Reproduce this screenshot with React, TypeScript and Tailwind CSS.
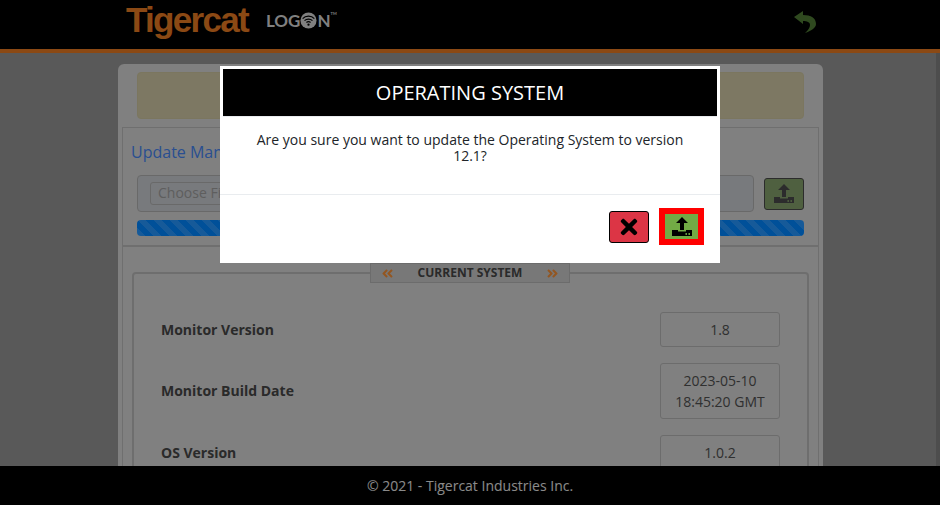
import { FaTimes, FaAngleDoubleLeft, FaAngleDoubleRight } from "react-icons/fa";

function UploadIcon({ className, dots }: { className?: string; dots: string }) {
  return (
    <svg viewBox="0 0 20 20" className={className} fill="currentColor">
      <path d="M10 0 L16 6 L12 6 L12 13 L8 13 L8 6 L4 6 Z" />
      <path d="M0 13 L6 13 L6 14.5 L14 14.5 L14 13 L20 13 L20 19 L0 19 Z" />
      <rect x="13.5" y="16" width="1.4" height="2" fill={dots} />
      <rect x="16.5" y="16" width="1.4" height="2" fill={dots} />
    </svg>
  );
}

function BackArrow() {
  return (
    <svg viewBox="0 0 22 22" className="w-[22px] h-[22px] text-[#4f7b34]" fill="currentColor">
      <path d="M0 6 L9 0 L9 4 C17 4 22 7 22 13 C22 17 17 20 11 22 C14 19 16 17 16 14 C16 11 13 10 9 10 L9 13 Z" />
    </svg>
  );
}

function WifiO() {
  return (
    <svg viewBox="0 0 18 18" className="w-[17px] h-[17px]">
      <circle cx="9" cy="9" r="8.5" fill="#d5d5d5" />
      <path d="M2.8 7 C6 3.6 12 3.6 15.2 7 M4.8 9.2 C7 7 11 7 13.2 9.2 M6.8 11.2 C8 10.2 10 10.2 11.2 11.2" fill="none" stroke="#000" strokeWidth="1.3" />
      <circle cx="9" cy="13.4" r="1.2" fill="#000" />
    </svg>
  );
}

function InfoRow({ label, lines }: { label: string; lines: string[] }) {
  return (
    <div className="flex items-center justify-between">
      <div className="font-bold text-[14px] text-[#464646] -mt-[1px]">{label}</div>
      <div className="w-[120px] shrink-0 border border-[#b4b4b4] rounded-[3px] py-[6px] text-center text-[14px] leading-[21px] text-[#505050]">
        {lines.map((l) => (
          <div key={l}>{l}</div>
        ))}
      </div>
    </div>
  );
}

export default function App() {
  return (
    <div className="relative h-screen flex flex-col overflow-hidden font-['Open_Sans',sans-serif] bg-[#949494]">
      <header className="h-[53px] shrink-0 bg-black border-b-[4px] border-[#e87b22] flex items-center pl-[126px] pr-[124px]">
        <div className="font-['Liberation_Sans',sans-serif] font-bold text-[35px] leading-none tracking-[-1.7px] text-[#e87b22] -mt-[10px]">
          Tigercat
        </div>
        <div className="ml-[18px] -mt-[8px] flex items-center font-['Lato',sans-serif] font-bold text-[17px] leading-none text-[#d5d5d5]">
          <span>LOG</span>
          <WifiO />
          <span>N</span>
          <span className="text-[4px] self-start">TM</span>
        </div>
        <div className="ml-auto -mt-[6px]">
          <BackArrow />
        </div>
      </header>

      <main className="relative flex-1 min-h-0 overflow-hidden flex items-start">
        <div className="ml-[118px] w-[705px] mt-[11px] bg-[#d5d5d5] rounded-md px-[4px] pt-[8px]">
          <div className="mx-[15px] h-[47px] bg-[#d0c8a5] border border-[#cdc59f] rounded" />
          <div className="mt-[8px] border border-[#b9b9b9] pt-[13px] pb-[9px] px-[8px]">
            <h2 className="text-[16px] leading-[22px] text-[#4684f0]">Update Manager</h2>
            <div className="mx-[6px] mt-[12px] flex items-center gap-[10px]">
              <div className="flex-1 h-[37px] border border-[#b0b0b0] rounded bg-[#c8cbd0] flex items-center px-[12px]">
                <div className="h-[23px] px-[7px] border border-[#b0b0b0] rounded-[3px] text-[14px] leading-[19px] text-[#9d9d9d]">
                  Choose File
                </div>
              </div>
              <button className="w-[40px] h-[32px] bg-[#84a06b] border border-[#4a4a4a] rounded-[3px] flex items-center justify-center text-[#4a4a4a]">
                <UploadIcon className="w-[20px] h-[20px]" dots="#84a06b" />
              </button>
            </div>
            <div className="mx-[6px] mt-[8px] h-[16px] rounded bg-[#0085ff] bg-[linear-gradient(45deg,rgba(255,255,255,.15)_25%,transparent_25%,transparent_50%,rgba(255,255,255,.15)_50%,rgba(255,255,255,.15)_75%,transparent_75%,transparent)] bg-[length:16px_16px]" />
          </div>
          <div className="border border-[#b9b9b9] h-[400px] px-[9px] pt-[16px]">
            <fieldset className="border-2 border-[#b8b8b8] rounded px-[27px] pb-[20px]">
              <legend className="ml-[209px] w-[200px] h-[20px] bg-[#c8c8c8] border border-[#b4b4b4] flex items-center justify-between px-[10px]">
                <FaAngleDoubleLeft className="w-[13px] h-[13px] text-[#f59038]" />
                <span className="font-bold text-[12px] text-[#464646]">CURRENT SYSTEM</span>
                <FaAngleDoubleRight className="w-[13px] h-[13px] text-[#f59038]" />
              </legend>
              <div className="mt-[29px] flex flex-col gap-[16px]">
                <InfoRow label="Monitor Version" lines={["1.8"]} />
                <InfoRow label="Monitor Build Date" lines={["2023-05-10", "18:45:20 GMT"]} />
                <InfoRow label="OS Version" lines={["1.0.2"]} />
              </div>
            </fieldset>
          </div>
        </div>
        <div className="absolute top-0 bottom-0 right-0 w-[4px] bg-[#808080]" />
      </main>

      <footer className="h-[39px] shrink-0 bg-black flex items-center justify-center text-[14px] text-[#e6e6e6]">
        © 2021 - Tigercat Industries Inc.
      </footer>

      <div className="absolute inset-0 bg-black/40 flex justify-center items-start">
        <div className="mt-[66px] w-[500px] bg-white">
          <div className="m-[3px] mb-0 h-[48px] bg-black border-b border-[#e9ecef] flex items-center justify-center text-white text-[20px]">
            OPERATING SYSTEM
          </div>
          <div className="h-[78px] border-b border-[#e9ecef] px-[30px] pt-[15px] text-center text-[14px] leading-[16px] text-[#212529]">
            Are you sure you want to update the Operating System to version 12.1?
          </div>
          <div className="h-[68px] flex items-start justify-end pr-[16px] pt-[13px] gap-[10px]">
            <button className="mt-[3px] w-[40px] h-[32px] bg-[#dc3545] border border-black rounded-[3px] flex items-center justify-center text-black">
              <FaTimes size={24} />
            </button>
            <button className="w-[45px] h-[37px] bg-[#72ab45] border-[6px] border-[#ff0000] flex items-center justify-center text-black">
              <UploadIcon className="w-[20px] h-[20px]" dots="#72ab45" />
            </button>
          </div>
        </div>
      </div>
    </div>
  );
}
